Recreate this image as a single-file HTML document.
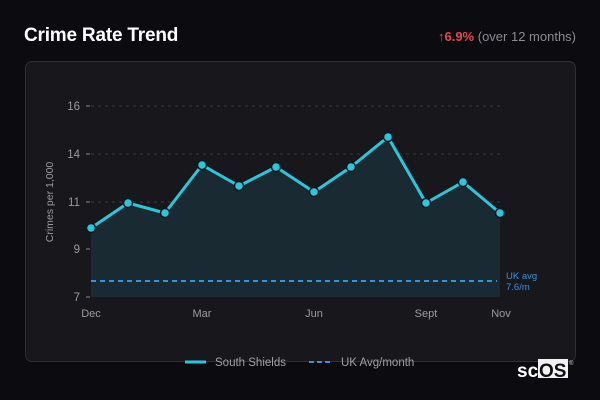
<!DOCTYPE html>
<html><head><style>
body{margin:0;width:600px;height:400px;background:#0c0b10;font-family:"Liberation Sans","DejaVu Sans",sans-serif;overflow:hidden;position:relative}
.t{position:absolute;left:24px;top:25px;color:#fff;font-weight:bold;font-size:19px;letter-spacing:-0.2px}
.r{position:absolute;right:24px;top:29px;font-size:13px;color:#8a8a8f}
.r b{color:#e5484d}
.card{position:absolute;left:25px;top:61px;width:549px;height:299px;background:#18181c;border:1px solid #2e2e33;border-radius:7px}
svg{position:absolute;left:0;top:0}
</style></head><body>
<div class="t">Crime Rate Trend</div>
<div class="r"><b style="font-weight:normal">↑</b><b>6.9%</b> (over 12 months)</div>
<div class="card"></div>
<svg width="600" height="400" font-family="Liberation Sans,sans-serif">
<g stroke="#3a3a40" stroke-dasharray="3,4" stroke-width="1">
<line x1="91" y1="106" x2="500" y2="106"/><line x1="91" y1="154" x2="500" y2="154"/><line x1="91" y1="202" x2="500" y2="202"/><line x1="91" y1="249" x2="500" y2="249"/></g>
<g stroke="#888" stroke-width="1"><line x1="86" y1="106" x2="90" y2="106"/><line x1="86" y1="154" x2="90" y2="154"/><line x1="86" y1="202" x2="90" y2="202"/><line x1="86" y1="249" x2="90" y2="249"/><line x1="86" y1="297" x2="90" y2="297"/></g>
<g fill="#9a9aa0" font-size="11.5" text-anchor="end"><text x="80" y="110">16</text><text x="80" y="158">14</text><text x="80" y="206">11</text><text x="80" y="253">9</text><text x="80" y="301">7</text></g>
<text transform="translate(53,202) rotate(-90)" fill="#9a9aa0" font-size="10.5" text-anchor="middle">Crimes per 1,000</text>
<polygon fill="#1a2a32" points="91,228 128,203 165,213 202,165 239,186 276,167 314,192 351,167 388,137 426,203 463,182 500,213 500,297 91,297"/>
<line x1="91" y1="281" x2="497" y2="281" stroke="#3b8fe0" stroke-width="2" stroke-dasharray="5,4"/>
<polyline fill="none" stroke="#2cc6dc" stroke-width="3" stroke-linejoin="round" points="91,228 128,203 165,213 202,165 239,186 276,167 314,192 351,167 388,137 426,203 463,182 500,213"/>
<g fill="#2cc6dc" stroke="#0c1a20" stroke-width="1.5">
<circle cx="91" cy="228" r="4.5"/><circle cx="128" cy="203" r="4.5"/><circle cx="165" cy="213" r="4.5"/><circle cx="202" cy="165" r="4.5"/><circle cx="239" cy="186" r="4.5"/><circle cx="276" cy="167" r="4.5"/><circle cx="314" cy="192" r="4.5"/><circle cx="351" cy="167" r="4.5"/><circle cx="388" cy="137" r="4.5"/><circle cx="426" cy="203" r="4.5"/><circle cx="463" cy="182" r="4.5"/><circle cx="500" cy="213" r="4.5"/></g>
<g fill="#3b8fe0" font-size="9.5"><text x="506" y="279">UK avg</text><text x="506" y="290">7.6/m</text></g>
<g fill="#9a9aa0" font-size="11" text-anchor="middle"><text x="91" y="317">Dec</text><text x="202" y="317">Mar</text><text x="314" y="317">Jun</text><text x="426" y="317">Sept</text><text x="501" y="317">Nov</text></g>
<line x1="185" y1="362" x2="206" y2="362" stroke="#2cc6dc" stroke-width="3"/>
<text x="215" y="366" fill="#a0a0a6" font-size="11.5">South Shields</text>
<line x1="309" y1="362" x2="333" y2="362" stroke="#3b8fe0" stroke-width="2" stroke-dasharray="5,3"/>
<text x="341" y="366" fill="#a0a0a6" font-size="11.5">UK Avg/month</text>
<text x="517" y="377" fill="#fff" font-size="19" font-weight="bold">sc</text>
<rect x="538" y="359" width="30" height="19" fill="#f2f2f2"/>
<text x="539" y="377" fill="#111" font-size="19" font-weight="bold">OS</text>
<text x="569" y="365" fill="#ccc" font-size="6">®</text>
</svg>
</body></html>
